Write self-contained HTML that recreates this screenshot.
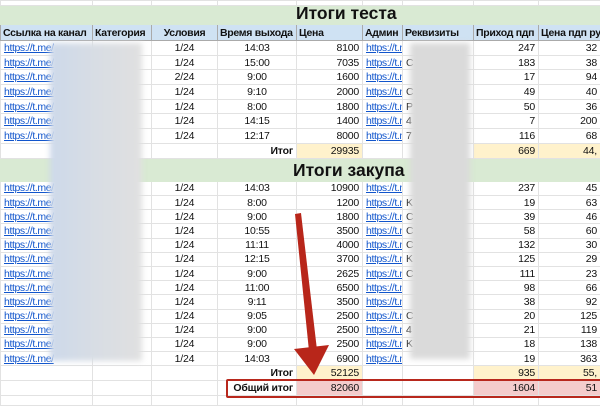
<!DOCTYPE html><html><head><meta charset="utf-8"><style>
body{margin:0;width:600px;height:400px;overflow:hidden;background:#fff;font-family:"Liberation Sans",Arial,sans-serif;position:relative}
table{border-collapse:collapse;table-layout:fixed;position:absolute;left:0;top:0;width:600px}
td{border:1px solid #e2e2e2;font-size:10.5px;padding:0 3px;white-space:nowrap;overflow:hidden;color:#111;line-height:12px;letter-spacing:-0.2px}
.r{text-align:right}.c{text-align:center}
a{color:#1155cc;text-decoration:underline;letter-spacing:-0.4px}
.t td{background:#d9ead3;border-color:#d9ead3}
.h td{background:#cfe2f3;font-weight:bold;font-size:10.5px;border-color:#aaa;letter-spacing:-0.3px;padding:0 2px}
.y{background:#fff2cc}.p{background:#f4cccc}
b{font-weight:bold}
.d td{height:13.7px}.e td{height:13.2px}
.blur{position:absolute;filter:blur(3px)}
.title{position:absolute;font-weight:bold;font-size:17.5px;color:#111}
</style></head><body>
<table>
<colgroup><col style="width:92px"><col style="width:59px"><col style="width:66px"><col style="width:79px"><col style="width:66px"><col style="width:40px"><col style="width:71px"><col style="width:65px"><col style="width:62px"></colgroup>
<tr style="height:5px"><td></td><td></td><td></td><td></td><td></td><td></td><td></td><td></td><td></td></tr>
<tr class="t" style="height:19px"><td colspan="9"></td></tr>
<tr class="h" style="height:16px"><td>Ссылка на канал</td><td>Категория</td><td class="c">Условия</td><td>Время выхода</td><td>Цена</td><td>Админ</td><td>Реквизиты</td><td>Приход пдп</td><td>Цена пдп руб</td></tr>
<tr class="d"><td><a>https://t.me/</a></td><td></td><td class="c">1/24</td><td class="c">14:03</td><td class="r">8100</td><td><a>https://t.m</a></td><td></td><td class="r">247</td><td class="r">32</td></tr>
<tr class="d"><td><a>https://t.me/</a></td><td></td><td class="c">1/24</td><td class="c">15:00</td><td class="r">7035</td><td><a>https://t.m</a></td><td>C</td><td class="r">183</td><td class="r">38</td></tr>
<tr class="d"><td><a>https://t.me/</a></td><td></td><td class="c">2/24</td><td class="c">9:00</td><td class="r">1600</td><td><a>https://t.m</a></td><td></td><td class="r">17</td><td class="r">94</td></tr>
<tr class="d"><td><a>https://t.me/</a></td><td></td><td class="c">1/24</td><td class="c">9:10</td><td class="r">2000</td><td><a>https://t.m</a></td><td>C</td><td class="r">49</td><td class="r">40</td></tr>
<tr class="d"><td><a>https://t.me/</a></td><td></td><td class="c">1/24</td><td class="c">8:00</td><td class="r">1800</td><td><a>https://t.m</a></td><td>P</td><td class="r">50</td><td class="r">36</td></tr>
<tr class="d"><td><a>https://t.me/</a></td><td></td><td class="c">1/24</td><td class="c">14:15</td><td class="r">1400</td><td><a>https://t.m</a></td><td>4</td><td class="r">7</td><td class="r">200</td></tr>
<tr class="d"><td><a>https://t.me/</a></td><td></td><td class="c">1/24</td><td class="c">12:17</td><td class="r">8000</td><td><a>https://t.m</a></td><td>7</td><td class="r">116</td><td class="r">68</td></tr>
<tr style="height:15px"><td></td><td></td><td></td><td class="r"><b>Итог</b></td><td class="r y">29935</td><td></td><td></td><td class="r y">669</td><td class="r y">44,</td></tr>
<tr class="t" style="height:23px"><td colspan="9"></td></tr>
<tr class="e"><td><a>https://t.me/</a></td><td></td><td class="c">1/24</td><td class="c">14:03</td><td class="r">10900</td><td><a>https://t.m</a></td><td></td><td class="r">237</td><td class="r">45</td></tr>
<tr class="e"><td><a>https://t.me/</a></td><td></td><td class="c">1/24</td><td class="c">8:00</td><td class="r">1200</td><td><a>https://t.m</a></td><td>K</td><td class="r">19</td><td class="r">63</td></tr>
<tr class="e"><td><a>https://t.me/</a></td><td></td><td class="c">1/24</td><td class="c">9:00</td><td class="r">1800</td><td><a>https://t.m</a></td><td>C</td><td class="r">39</td><td class="r">46</td></tr>
<tr class="e"><td><a>https://t.me/</a></td><td></td><td class="c">1/24</td><td class="c">10:55</td><td class="r">3500</td><td><a>https://t.m</a></td><td>C</td><td class="r">58</td><td class="r">60</td></tr>
<tr class="e"><td><a>https://t.me/</a></td><td></td><td class="c">1/24</td><td class="c">11:11</td><td class="r">4000</td><td><a>https://t.m</a></td><td>C</td><td class="r">132</td><td class="r">30</td></tr>
<tr class="e"><td><a>https://t.me/</a></td><td></td><td class="c">1/24</td><td class="c">12:15</td><td class="r">3700</td><td><a>https://t.m</a></td><td>K</td><td class="r">125</td><td class="r">29</td></tr>
<tr class="e"><td><a>https://t.me/</a></td><td></td><td class="c">1/24</td><td class="c">9:00</td><td class="r">2625</td><td><a>https://t.m</a></td><td>C</td><td class="r">111</td><td class="r">23</td></tr>
<tr class="e"><td><a>https://t.me/</a></td><td></td><td class="c">1/24</td><td class="c">11:00</td><td class="r">6500</td><td><a>https://t.m</a></td><td></td><td class="r">98</td><td class="r">66</td></tr>
<tr class="e"><td><a>https://t.me/</a></td><td></td><td class="c">1/24</td><td class="c">9:11</td><td class="r">3500</td><td><a>https://t.m</a></td><td></td><td class="r">38</td><td class="r">92</td></tr>
<tr class="e"><td><a>https://t.me/</a></td><td></td><td class="c">1/24</td><td class="c">9:05</td><td class="r">2500</td><td><a>https://t.m</a></td><td>C</td><td class="r">20</td><td class="r">125</td></tr>
<tr class="e"><td><a>https://t.me/</a></td><td></td><td class="c">1/24</td><td class="c">9:00</td><td class="r">2500</td><td><a>https://t.m</a></td><td>4</td><td class="r">21</td><td class="r">119</td></tr>
<tr class="e"><td><a>https://t.me/</a></td><td></td><td class="c">1/24</td><td class="c">9:00</td><td class="r">2500</td><td><a>https://t.m</a></td><td>K</td><td class="r">18</td><td class="r">138</td></tr>
<tr class="e"><td><a>https://t.me/</a></td><td></td><td class="c">1/24</td><td class="c">14:03</td><td class="r">6900</td><td><a>https://t.m</a></td><td></td><td class="r">19</td><td class="r">363</td></tr>
<tr style="height:15px"><td></td><td></td><td></td><td class="r"><b>Итог</b></td><td class="r y">52125</td><td></td><td></td><td class="r y">935</td><td class="r y">55,</td></tr>
<tr style="height:15px"><td></td><td></td><td></td><td class="r"><b>Общий итог</b></td><td class="r p">82060</td><td></td><td></td><td class="r p">1604</td><td class="r p">51</td></tr>
<tr style="height:10px"><td></td><td></td><td></td><td></td><td></td><td></td><td></td><td></td><td></td></tr>
</table>
<div class="title" style="left:296px;top:3px">Итоги теста</div>
<div class="title" style="left:293px;top:160px">Итоги закупа</div>
<div class="blur" style="left:50px;top:43px;width:92px;height:318px;background:linear-gradient(90deg,#cdd9ea,#d8dde4 50%,#e0e0e0)"></div>
<div class="blur" style="left:410px;top:43px;width:60px;height:316px;background:#dadada"></div>
<div style="position:absolute;left:226px;top:379px;width:380px;height:15px;border:2px solid #b8281d;border-radius:2px"></div>
<svg style="position:absolute;left:0;top:0" width="600" height="400"><path d="M295 214 L301 213 L317 350 L309 351 Z" fill="#b8261a"/><path d="M294 349 L329 345 L314 375 Z" fill="#b8261a"/></svg>
</body></html>
